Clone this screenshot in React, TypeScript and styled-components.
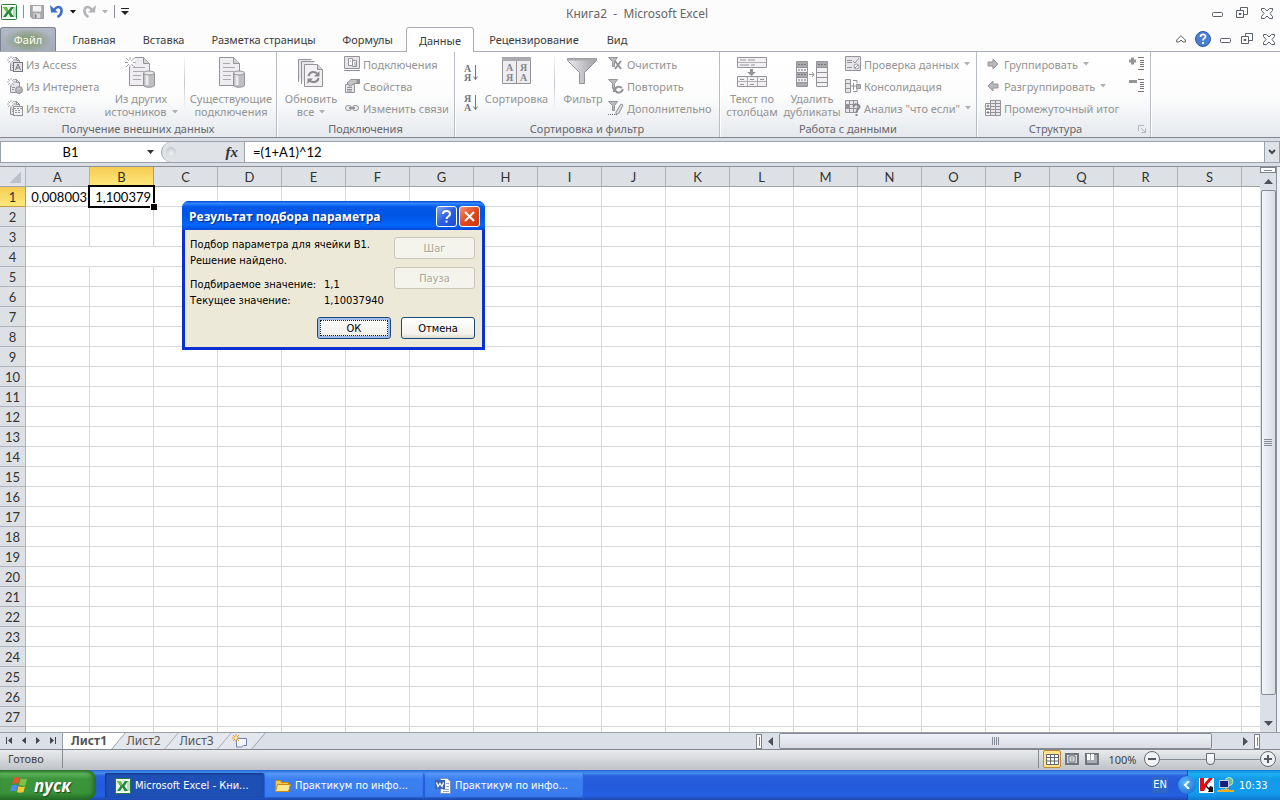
import React from "react";
import styled, { createGlobalStyle, css } from "styled-components";

const UI = `"Noto Sans", "Open Sans", sans-serif`;
const TAHOMA = `"DejaVu Sans Condensed", "DejaVu Sans", sans-serif`;
const CELL = `Lato, "Open Sans", sans-serif`;

const GlobalStyle = createGlobalStyle`
  * { box-sizing: border-box; }
  html, body, #root { height: 100%; margin: 0; }
  body { overflow: hidden; font-family: ${UI}; font-size: 11px; }
  button, input { font: inherit; color: inherit; margin: 0; }
  button { padding: 0; border: 0; background: none; white-space: nowrap; }
  svg { display: block; flex: none; }
`;

const Window = styled.div`
  position: relative;
  display: flex;
  flex-direction: column;
  height: 100vh;
  background: #fcfcfc;
`;

/* ---------- title bar ---------- */

const TitleBar = styled.header`
  display: flex;
  align-items: center;
  height: 28px;
  color: #666;
`;

const QuickAccess = styled.div`
  display: flex;
  flex: 1;
  align-items: center;
  gap: 6px;
  height: 28px;
  padding: 0 0 5px 1px;
`;

const Separator = styled.span`
  width: 1px;
  height: 13px;
  background: #8a8f98;
`;

const Title = styled.h1`
  margin: 0;
  font-size: 12px;
  font-weight: 400;
  line-height: 16px;
  white-space: pre;
`;

const WindowControls = styled.div`
  display: flex;
  flex: 1;
  justify-content: flex-end;
  align-items: center;
  gap: 12px;
  height: 28px;
  padding: 0 7px 2px 0;
`;

const IconButton = styled.button`
  display: flex;
  align-items: center;
  justify-content: center;
`;

/* ---------- tabs ---------- */

const TabBar = styled.nav`
  display: flex;
  align-items: flex-end;
  height: 24px;
  border-bottom: 1px solid #a9adb3;
`;

const Tab = styled.button<{ $w: number; $active?: boolean }>`
  width: ${(p) => p.$w}px;
  height: 24px;
  color: #3b3b3b;
  line-height: 23px;
  ${(p) =>
    p.$active &&
    css`
      margin-bottom: -1px;
      height: 25px;
      border: 1px solid #a9adb3;
      border-bottom: 0;
      border-radius: 3px 3px 0 0;
      background: #fff;
    `}
`;

const FileTab = styled(Tab)`
  margin-right: 3px;
  border: 1px solid #7c828b;
  border-bottom: 0;
  border-radius: 3px 3px 0 0;
  background: radial-gradient(ellipse 24px 12px at 50% 54%, #86a070, #8fa287 45%, transparent), linear-gradient(#b2b8c4, #a4acba);
  color: #fff;
`;

const BookControls = styled.div`
  display: flex;
  flex: 1;
  justify-content: flex-end;
  align-items: center;
  gap: 9px;
  height: 24px;
  padding-right: 5px;
`;

/* ---------- ribbon ---------- */

const Ribbon = styled.section`
  display: flex;
  height: 86px;
  border-bottom: 1px solid #82878f;
  background: linear-gradient(#fff, #fdfdfd 50%, #e6e9ed);
  color: #949494;
`;

const Group = styled.div<{ $w: number }>`
  display: flex;
  flex-direction: column;
  flex: none;
  width: ${(p) => p.$w}px;
  border-right: 1px solid #b9bec5;
  box-shadow: 1px 0 0 #fff;
`;

const GroupBody = styled.div<{ $pad: number }>`
  display: flex;
  height: 67px;
  padding: 1px 0 0 ${(p) => p.$pad}px;
`;

const GroupCaption = styled.div<{ $launcher?: boolean }>`
  position: relative;
  height: 18px;
  padding: 1px ${(p) => (p.$launcher ? 16 : 0)}px 0 0;
  color: #67676f;
  line-height: 18px;
  text-align: center;
`;

const Launcher = styled.button`
  position: absolute;
  right: 4px;
  top: 6px;
`;

const Commands = styled.div<{ $w: number; $top?: number }>`
  flex: none;
  width: ${(p) => p.$w}px;
  padding-top: ${(p) => p.$top ?? 0}px;
`;

const SmallCommand = styled.button`
  display: flex;
  align-items: center;
  gap: 3px;
  height: 22px;
`;

const SortCommand = styled.button`
  display: flex;
  align-items: center;
  height: 30px;
`;

const BigCommand = styled.button<{ $w: number }>`
  display: flex;
  flex: none;
  flex-direction: column;
  align-items: center;
  width: ${(p) => p.$w}px;
  padding-top: 4px;
  line-height: 13px;
`;

const BigLabel = styled.span`
  display: flex;
  flex-direction: column;
  align-items: center;
  margin-top: 3px;
`;

const LabelLine = styled.span`
  display: flex;
  align-items: center;
  gap: 5px;
`;

const Divider = styled.span`
  flex: none;
  width: 1px;
  height: 56px;
  margin: 2px 3px 0;
  background: linear-gradient(#fafafa, #c3c7cd, #fafafa);
`;

/* ---------- formula bar ---------- */

const FormulaBar = styled.section`
  display: flex;
  height: 28px;
  padding: 3px 0;
  background: #d9dee5;
  color: #000;
  font-family: ${CELL};
  font-size: 13px;
`;

const NameBox = styled.div`
  display: flex;
  align-items: center;
  width: 158px;
  border: 1px solid #98a1ac;
  border-right: 0;
  background: #fff;
`;

const NameInput = styled.input`
  flex: 1;
  min-width: 0;
  padding: 0 3px 0 0;
  border: 0;
  outline: 0;
  background: none;
  text-align: center;
`;

const FxBox = styled.div`
  display: flex;
  align-items: center;
  justify-content: space-between;
  width: 87px;
  padding: 0 6px 0 3px;
  border: solid #98a1ac;
  border-width: 1px 1px 1px 0;
  background: linear-gradient(90deg, #fff 8px, #dfe3e8 8px);
`;

const FxCap = styled.div`
  display: flex;
  align-items: center;
  width: 30px;
  height: 20px;
  padding-left: 4px;
  border-left: 1px solid #98a1ac;
  border-radius: 11px 0 0 11px;
  background: #dfe3e8;
`;

const Knob = styled.span`
  width: 10px;
  height: 10px;
  border-radius: 50%;
  background: radial-gradient(circle at 50% 65%, #f2f3f5, #b7bcc4);
`;

const Fx = styled.button`
  font: italic 700 15px "Liberation Serif", serif;
  color: #333;
`;

const FormulaInput = styled.input`
  flex: 1;
  min-width: 0;
  padding: 0 8px;
  border: solid #98a1ac;
  border-width: 1px 0;
  border-radius: 0;
  outline: 0;
  background: #fff;
`;

const ExpandButton = styled(IconButton)`
  width: 16px;
  border: 1px solid #98a1ac;
  background: #dfe3e8;
`;

/* ---------- sheet ---------- */

const Workspace = styled.main`
  display: flex;
  flex: 1;
  min-height: 0;
  border-top: 1px solid #8c9199;
  background: #f0f1f4;
`;

const SheetPane = styled.div`
  flex: 1;
  min-width: 0;
  overflow: hidden;
  background: #fff;
`;

const Sheet = styled.table`
  width: 1306px;
  table-layout: fixed;
  border-collapse: separate;
  border-spacing: 0;
  font-family: ${CELL};
  font-size: 13px;
  line-height: 17px;
`;

const Corner = styled.td`
  width: 26px;
  height: 20px;
  padding: 0;
  border-right: 1px solid #b4b8be;
  border-bottom: 1px solid #9fa5ad;
  background: linear-gradient(135deg, #dfe3e8 50%, #bcc1c8 50%) 10px 5px / 11px 11px no-repeat #dfe3e8;
`;

const headOn = css`
  border-color: #c79a43;
  background: linear-gradient(#f6cc52, #fee87c);
`;

const ColHead = styled.th<{ $on: boolean }>`
  width: 64px;
  height: 20px;
  padding: 2px 0 0;
  border-right: 1px solid #b0b4ba;
  border-bottom: 1px solid #9fa5ad;
  background: #dde1e6;
  color: #333;
  font-weight: 400;
  ${(p) => p.$on && headOn}
`;

const RowHead = styled.th<{ $on: boolean }>`
  height: 20px;
  padding: 2px 0 0;
  border-right: 1px solid #b0b4ba;
  border-bottom: 1px solid #b0b4ba;
  background: #dde1e6;
  color: #333;
  font-weight: 400;
  ${(p) => p.$on && headOn}
`;

const Cell = styled.td<{ $plain?: boolean; $selected?: boolean }>`
  height: 20px;
  padding: 2px 2px 0 0;
  border-right: 1px solid ${(p) => (p.$plain ? "#fff" : "#d6d8da")};
  border-bottom: 1px solid #d6d8da;
  text-align: right;
  ${(p) =>
    p.$selected &&
    css`
      position: relative;
      z-index: 1;
      &::before {
        content: "";
        position: absolute;
        inset: -2px;
        border: 2px solid #000;
      }
      &::after {
        content: "";
        position: absolute;
        right: -4px;
        bottom: -4px;
        width: 6px;
        height: 6px;
        border: solid #fff;
        border-width: 1px 0 0 1px;
        background: #000;
      }
    `}
`;

const VScroll = styled.div`
  display: flex;
  flex-direction: column;
  align-items: center;
  width: 17px;
  margin-right: 3px;
  border-right: 1px solid #8c9199;
  background: #dbdfe6;
`;

const SplitBox = styled.span<{ $vertical?: boolean }>`
  display: flex;
  flex: none;
  align-items: center;
  justify-content: center;
  width: ${(p) => (p.$vertical ? 6 : 16)}px;
  height: ${(p) => (p.$vertical ? 15 : 6)}px;
  border: 1px solid #7d828a;
  background: #fff;
  &::before {
    content: "";
    width: ${(p) => (p.$vertical ? 1 : 8)}px;
    height: ${(p) => (p.$vertical ? 9 : 1)}px;
    background: #7d828a;
  }
`;

const ScrollButton = styled(IconButton)`
  flex: none;
  width: 17px;
  height: 17px;
`;

const VThumb = styled.div`
  display: flex;
  flex: 1;
  align-items: center;
  justify-content: center;
  width: 15px;
  margin-bottom: 20px;
  border: 1px solid #858c98;
  border-radius: 2px;
  background: linear-gradient(90deg, #f3f5f8, #d9dde4);
`;

/* ---------- sheet tab row ---------- */

const SheetBar = styled.div`
  display: flex;
  align-items: center;
  height: 17px;
  padding-right: 20px;
  border-top: 1px solid #989da6;
  background: #dbe0e8;
`;

const SheetNav = styled.div`
  display: flex;
  align-items: center;
  justify-content: space-between;
  flex: none;
  width: 63px;
  height: 16px;
  padding: 0 6px 2px;
  border-right: 1px solid #989da6;
`;

const SheetTabs = styled.div`
  display: flex;
  flex: 1;
  height: 16px;
  overflow: hidden;
  font-size: 12px;
`;

const SheetTab = styled.button<{ $active?: boolean; $w: number }>`
  position: relative;
  z-index: ${(p) => (p.$active ? 2 : 1)};
  width: ${(p) => p.$w}px;
  height: 16px;
  padding-right: 4px;
  color: #555;
  font-weight: ${(p) => (p.$active ? 700 : 400)};
  line-height: 16px;
  &::before {
    content: "";
    position: absolute;
    z-index: -1;
    inset: 0 0 0 ${(p) => (p.$active ? -20 : 0)}px;
    transform: skewX(-40deg);
    border-right: 1px solid #989da6;
    background: ${(p) => (p.$active ? "#fff" : "#e4e8ee")};
  }
`;

const NewSheetTab = styled(SheetTab)`
  display: flex;
  align-items: center;
  justify-content: center;
`;

const HScroll = styled.div`
  display: flex;
  align-items: center;
  flex: none;
  width: 504px;
  height: 16px;
`;

const HThumb = styled.div`
  display: flex;
  flex: 1;
  align-items: center;
  justify-content: center;
  height: 16px;
  margin-right: 25px;
  border: 1px solid #858c98;
  border-radius: 2px;
  background: linear-gradient(#eef1f5, #d9dde4);
`;

/* ---------- status bar ---------- */

const StatusBar = styled.footer`
  display: flex;
  align-items: center;
  height: 21px;
  padding: 0 4px 2px 0;
  border-top: 1px solid #82878f;
  background: linear-gradient(#e9eaec, #bfc3c7);
  color: #444;
`;

const StatusText = styled.span`
  width: 63px;
  padding-left: 8px;
  border-right: 1px solid #878b92;
  line-height: 18px;
`;

const ViewTools = styled.div`
  display: flex;
  align-items: center;
  gap: 2px;
  margin-left: auto;
  padding-left: 4px;
  border-left: 1px solid #878b92;
`;

const ViewButton = styled(IconButton)<{ $on?: boolean }>`
  width: 18px;
  height: 18px;
  border-radius: 2px;
  ${(p) =>
    p.$on &&
    css`
      border: 1px solid #c28a30;
      background: #fde38a;
    `}
`;

const ZoomValue = styled.button`
  width: 43px;
`;

const RoundButton = styled(IconButton)`
  width: 16px;
  height: 16px;
  border: 1px solid #666b73;
  border-radius: 50%;
  background: #f1f2f4;
`;

const ZoomSlider = styled.input`
  width: 100px;
  height: 16px;
  appearance: none;
  background: linear-gradient(#868c96, #868c96) center / 100% 1px no-repeat;
  &::-webkit-slider-thumb {
    appearance: none;
    width: 9px;
    height: 12px;
    background: linear-gradient(#fff, #e6e8eb);
    border: 1px solid #6a6f78;
    border-radius: 1px 1px 5px 5px;
  }
`;

/* ---------- taskbar ---------- */

const Taskbar = styled.div`
  display: flex;
  align-items: stretch;
  height: 30px;
  background: linear-gradient(#2a63d8, #4590ee 10%, #2860dd 20%, #2259d9 50%, #2461e2 85%, #1b48b0);
  color: #fff;
  font-family: ${TAHOMA};
`;

const StartButton = styled.button`
  display: flex;
  align-items: center;
  gap: 5px;
  width: 96px;
  margin-right: 9px;
  padding-left: 10px;
  border-radius: 0 9px 9px 0;
  background: linear-gradient(#2f7a30, #5cb45a 12%, #3c953b 30%, #3a933a 75%, #256c28);
  box-shadow: inset -3px 0 4px #24682a;
  font: italic 700 17px "Open Sans", "Noto Sans", sans-serif;
  text-shadow: 1px 1px 1px #1c4a1c;
`;

const TaskButton = styled.button<{ $active?: boolean }>`
  display: flex;
  align-items: center;
  gap: 4px;
  width: 159px;
  height: 25px;
  margin: 3px 1px 0 0;
  padding-left: 10px;
  border-radius: 2px;
  background: ${(p) => (p.$active ? "#1e4fb4" : "linear-gradient(#5a98f8, #3b80f2 25%, #387bee)")};
  box-shadow: ${(p) => (p.$active ? "inset 1px 1px 2px #123a8c" : "inset -1px -1px 1px #2a5cc4")};
`;

const Language = styled.span`
  align-self: center;
  margin: 0 19px 0 auto;
  padding: 0 1px;
  background: #2f67c5;
  line-height: 16px;
`;

const Tray = styled.div`
  display: flex;
  align-items: center;
  gap: 3px;
  width: 93px;
  background: linear-gradient(#1180da, #1cb0f2 12%, #139ae9 30%, #129aec 80%, #0e7bd0);
  box-shadow: inset 1px 0 0 #0d4f9e;
`;

const TrayToggle = styled(IconButton)`
  flex: none;
  width: 18px;
  height: 18px;
  margin-left: -9px;
  border-radius: 50%;
  background: radial-gradient(circle at 40% 35%, #5ab8ff, #0f62c8);
`;

const Clock = styled.time`
  margin-left: 2px;
`;

/* ---------- dialog ---------- */

const Dialog = styled.div`
  position: absolute;
  left: 182px;
  top: 201px;
  width: 303px;
  padding: 0 3px 3px;
  border-radius: 7px 7px 0 0;
  background: #0a30d4;
  color: #000;
  font-family: ${TAHOMA};
`;

const DialogTitle = styled.div`
  display: flex;
  align-items: center;
  gap: 2px;
  height: 29px;
  margin: 0 -3px;
  padding: 2px 5px 0 7px;
  border-radius: 7px 7px 0 0;
  background: linear-gradient(#0842c8, #2f88ff 8%, #0458e8 20%, #0055e5 50%, #0366fc 85%, #0548d4);
  color: #fff;
`;

const DialogHeading = styled.h2`
  flex: 1;
  margin: 0;
  font: 700 12px "Open Sans", "Noto Sans", sans-serif;
  text-shadow: 1px 1px 1px #0a2a80;
  white-space: nowrap;
`;

const CaptionButton = styled(IconButton)<{ $close?: boolean }>`
  width: 21px;
  height: 21px;
  border: 1px solid #fff;
  border-radius: 3px;
  background: ${(p) =>
    p.$close ? "linear-gradient(135deg, #f0957a, #e0491f 50%, #c8350e)" : "linear-gradient(135deg, #7ba4f4, #2b5fe0 50%, #1d4bd0)"};
`;

const DialogBody = styled.div`
  height: 117px;
  padding: 7px 7px 0 5px;
  background: #ece9d8;
`;

const DialogTop = styled.div`
  display: flex;
  justify-content: space-between;
`;

const DialogText = styled.div`
  line-height: 16px;
  white-space: nowrap;
`;

const Message = styled.p`
  margin: 0 0 8px;
`;

const Values = styled.dl`
  display: grid;
  grid-template-columns: 134px auto;
  margin: 0;
  dd { margin: 0; }
`;

const SideButtons = styled.div`
  display: flex;
  flex-direction: column;
  gap: 8px;
`;

const DialogButton = styled.button<{ $w: number; $default?: boolean }>`
  width: ${(p) => p.$w}px;
  height: 22px;
  padding-top: 1px;
  border: 1px solid #1c4a80;
  border-radius: 3px;
  background: linear-gradient(#fff, #f3f2ec 80%, #dcd8ca);
  line-height: 19px;
  ${(p) =>
    p.$default &&
    css`
      box-shadow: inset 0 0 0 2px #9db9ea;
      outline: 1px dotted #222;
      outline-offset: -4px;
    `}
  &:disabled {
    border-color: #c9c7ba;
    background: #f4f3ec;
    color: #a7a594;
    text-shadow: 1px 1px 0 #fff;
  }
`;

const DialogActions = styled.div`
  display: flex;
  justify-content: flex-end;
  gap: 10px;
  padding-top: 8px;
`;

/* ---------- icons ---------- */

const G = "#949498";
const D = "#77777b";
const L = "#e8e5ea";

const Small = ({ children }: { children: React.ReactNode }) => (
  <svg width="16" height="16" viewBox="0 0 16 16" fill="none" stroke={G}>
    {children}
  </svg>
);

const Big = ({ children }: { children: React.ReactNode }) => (
  <svg width="32" height="32" viewBox="0 0 32 32" fill="none" stroke={G}>
    {children}
  </svg>
);

const Spark = () => <path d="M4 0v2M4 6v3M0 4h2M6 4h3M1 1l2 2M7 1 5 3M1 7l2-2M7 7 5 5" stroke="#aaaaae" />;

const SourcePage = ({ children }: { children?: React.ReactNode }) => (
  <Small>
    <path d="M3.500 7.500v7h9v-10l-3-3h-2" fill={L} />
    <path d="M9.500 1.500v3h3M5 9.500h3M5 11.500h2" />
    <Spark />
    {children}
  </Small>
);

const AccessIcon = () => (
  <SourcePage>
    <rect x="6.500" y="6.500" width="9" height="9" fill="#e4e4e6" stroke={D} />
    <path d="m8.500 14 2.500-6 2.500 6M9.500 12h3" stroke={D} />
  </SourcePage>
);
const WebIcon = () => (
  <SourcePage>
    <circle cx="12" cy="12" r="3.500" fill="#b4b4b8" />
    <path d="M10 11h3" stroke="#d8d8dc" />
  </SourcePage>
);
const TextIcon = () => (
  <SourcePage>
    <rect x="6.500" y="6.500" width="9" height="9" fill="#f4f4f4" />
    <path d="M7 8.500h8M8 10.500h6M8 12.500h6" strokeDasharray="2 1" />
  </SourcePage>
);

const Page = () => (
  <>
    <path d="M4.500.5h14l6 6v22h-20z" fill="#efedf1" />
    <path d="M18.500.5v6h6" fill="#d5d5d9" />
    <path d="M8 10.500h12M8 14.500h11M8 18.500h8M8 22.500h8" stroke="#aaaaae" />
  </>
);
const Database = () => (
  <>
    <path d="M18.500 16v12c0 3 11 3 11 0V16" fill="#bfbfc3" />
    <path d="M22 18v10" stroke="#ededf0" strokeWidth="3" />
    <ellipse cx="24" cy="16" rx="5.500" ry="2" fill="#e7e7ea" />
  </>
);
const OtherSources = () => (
  <Big>
    <Page />
    <Database />
    <path d="M0 0h10v10H0z" fill="#fff" stroke="none" />
    <path d="M5 0v3M5 8v3M0 5.500h3M8 5.500h3M1 1l3 3M10 1 6 4M1 10l3-3M10 10 6 7" stroke="#aaaaae" />
  </Big>
);
const ExistingIcon = () => (
  <Big>
    <Page />
    <path d="M8 6.500h7" stroke="#aaaaae" />
    <Database />
  </Big>
);
const RefreshIcon = () => (
  <Big>
    <path d="M3.500 25V2.500h13M6.500 27V4.500h13" fill={L} />
    <path d="M9.500 7.500h13l5 5v17h-18z" fill="#f3f0f4" />
    <path d="M22.500 7.500v5h5" fill="#d5d5d9" />
    <path d="M13.500 19c1-5 7-5 9-2M23.500 21c-1 5-7 5-9 2" stroke="#88888c" strokeWidth="2" />
    <path d="M24.500 14v5.500h-5.500zM12.500 27v-5.500h5.500z" fill="#88888c" stroke="none" />
  </Big>
);
const ConnectionsIcon = () => (
  <Small>
    <path d="M.5.500h15v12H.5z" fill={L} />
    <path d="M4.500 2.500h4v7h-4zM8.500 4.500h4v6h-4z" fill="#fff" />
    <path d="M0 14.500h16M10 7h2M10 9h2M6 5h1" />
  </Small>
);
const PropertiesIcon = () => (
  <Small>
    <path d="M1.500 6.500h9v8h-9z" fill={L} />
    <path d="M3 9.500h5M3 11.500h5M3 13h5" />
    <path d="m3 5 4-3.500h6v4h-3l-4 3z" fill="#c4c4c8" />
    <path d="M13 1h3v5h-3z" fill={G} stroke="none" />
  </Small>
);
const LinksIcon = () => (
  <Small>
    <rect x="1.500" y="5.500" width="6" height="5" rx="2.500" fill="#eee" />
    <rect x="8.500" y="5.500" width="6" height="5" rx="2.500" fill="#eee" />
    <path d="M5 8h6" strokeWidth="2" />
  </Small>
);

const SortLetters = ({ a, b }: { a: string; b: string }) => (
  <svg width="16" height="18" viewBox="0 0 16 18" fill="none" stroke={D}>
    <g fill={D} stroke="none" fontFamily="Liberation Serif, serif" fontSize="10" fontWeight="700">
      <text x="0" y="8">{a}</text>
      <text x="0" y="17">{b}</text>
    </g>
    <path d="M11.500 1v15M9.500 12.500l2 3 2-3" />
  </svg>
);
const SortIcon = () => (
  <Big>
    <path d="M1.500.500h28v26h-28z" fill="#efedf1" />
    <path d="M1 0h29v4H1z" fill="#aaaaae" stroke="none" />
    <path d="M15.500 4v22" />
    <g fill="#85858a" stroke="none" fontFamily="Liberation Serif, serif" fontSize="10" fontWeight="700">
      <text x="5" y="14">А</text>
      <text x="5" y="24">Я</text>
      <text x="19" y="14">Я</text>
      <text x="19" y="24">А</text>
    </g>
  </Big>
);
const FilterIcon = () => (
  <Big>
    <defs>
      <linearGradient id="funnel">
        <stop offset="0" stopColor="#ededf0" />
        <stop offset="1" stopColor="#a0a0a5" />
      </linearGradient>
    </defs>
    <path d="M.5 1.500h29v2l-12 12v11h-5v-11l-12-12z" fill="url(#funnel)" />
    <path d="M1 2.500h28" stroke="#aaaaae" strokeWidth="2" />
  </Big>
);
const MiniFunnel = () => <path d="M.5 1.500h9l-3 4v5h-2v-5z" fill="#bcbcc0" />;
const ClearIcon = () => (
  <Small>
    <MiniFunnel />
    <path d="m7 5 6 8M13 5l-6 8" strokeWidth="2" />
  </Small>
);
const ReapplyIcon = () => (
  <Small>
    <MiniFunnel />
    <path d="M7 12c1-4 5-4 7-2M15 11c-1 4-5 4-7 3" strokeWidth="2" />
    <path d="M5 9v5h5z" fill={G} stroke="none" />
  </Small>
);
const AdvancedIcon = () => (
  <Small>
    <MiniFunnel />
    <path d="m8 12 5-8 2 1-4 8-3 2z" fill="#ddd" />
    <path d="M0 14.500h9" stroke={D} strokeDasharray="1 1" />
  </Small>
);
const TextColumnsIcon = () => (
  <Big>
    <path d="M1.500.500h29v10h-29zM1.500 19.500h29v10h-29z" fill="#f3f0f4" />
    <path d="M2 5.500h28M2 24.500h28M11.500 20v9M21.500 20v9" stroke="#b0b0b4" />
    <path d="M4 3h6M12 3h7M4 8h9M15 8h4M4 22.500h4M14 22.500h4M24 22.500h4M4 27.500h4M14 27.500h4" />
    <path d="M14 12h3v3h3l-4.500 4-4.500-4h3z" fill={G} stroke="none" />
  </Big>
);
const DuplicatesIcon = () => (
  <Big>
    <path d="M.5 4.500h11v25H.5zM20.500 4.500h11v25h-11z" fill="#f3f0f4" />
    <path d="M1 5h10v5H1zM1 15h10v5H1zM1 25h10v4H1zM21 5h10v5H21z" fill="#aaaaae" stroke="none" />
    <path d="M0 10.500h12M0 15.500h12M0 20.500h12M0 25.500h12M20 10.500h12M20 15.500h12M20 20.500h12M20 25.500h12M13 17.500h5M16 15l2 2.500-2 2.500" />
    <path d="M2 7.500h8M2 13h8M2 17.500h8M2 23h8M22 7.500h8" strokeDasharray="2 1" stroke={D} />
  </Big>
);
const ValidationIcon = () => (
  <Small>
    <path d="M.5.500h15v14H.5z" fill={L} />
    <path d="M2 4.500h5M2 6.500h5M2 11.500h5M8 5l2 2 4-5" />
    <circle cx="11.500" cy="10.500" r="2.500" fill="#fff" />
    <path d="m10 12 3-3" />
  </Small>
);
const ConsolidateIcon = () => (
  <Small>
    <path d="M.5 1.500h5v13h-5zM1 5.500h4M1 10.500h4" fill={L} />
    <path d="M5 8h6M8.500 5v7M8 2.500h4v3M8 13.500h4v-3" />
    <path d="M11.500 6.500h4v4h-4z" fill="#b4b4b8" />
  </Small>
);
const WhatIfIcon = () => (
  <Small>
    <path d="M.5.500h12v12H.5z" fill={L} />
    <path d="M.5 4.500h12M.5 8.500h12M4.500 1v11M8.500 1v11" />
    <path d="M1 5h3v3H1z" fill={G} stroke="none" />
    <path d="M8.500 7c0-4 6-3 6 0 0 2-3 2-3 5M10.500 15h2" stroke="#88888c" strokeWidth="2" />
  </Small>
);
const ArrowIcon = ({ left }: { left?: boolean }) => (
  <Small>
    <path d={left ? "m3 8 5-5v3h5v4H8v3z" : "m13 8-5-5v3H3v4h5v3z"} fill="#b8b8bc" />
  </Small>
);
const SubtotalIcon = () => (
  <Small>
    <path d="M5.500.500h10v15h-10z" fill={L} />
    <path d="M5.500 3.500h10M5.500 6.500h10M5.500 9.500h10M5.500 12.500h10M10.500 1v14" />
    <path d="M.5 3.500h5v5H.5zM.5 9.500h5v6H.5z" fill="#fff" />
    <path d="M1.500 6h3M3 4.500v3M1.500 12.500h3M3 11v3" stroke={D} />
  </Small>
);
const DetailIcon = ({ minus }: { minus?: boolean }) => (
  <Small>
    <path d={minus ? "M0 3.500h8" : "M0 5h7M3.500 1.500v7"} strokeWidth="3" />
    <path d="M9 1.500h6M11 4.500h4M11 6.500h4M11 8.500h4M11 10.500h4M9 13.500h6" stroke={D} />
  </Small>
);

const Caret = ({ color = "#b0b0b4" }: { color?: string }) => (
  <svg width="6" height="4" viewBox="0 0 6 4">
    <path d="M0 0h6L3 3.500z" fill={color} />
  </svg>
);

const ExcelIcon = () => (
  <svg width="16" height="16" viewBox="0 0 16 16">
    <rect x=".5" y=".5" width="15" height="15" rx="1" fill="#fff" stroke="#1f7a3c" />
    <path d="M12 3h3v10h-3z" fill="#b9dcc0" />
    <path d="M1 2h10v12H1z" fill="#e6f4e5" />
    <path d="M2 3h3.500l2 3.500L10 3h3L9.500 8l3.500 5H9.500l-2-3.500L5 13H2l3.500-5z" fill="#238a3c" />
    <path d="M2 3h3.500l2 3.500-2 1.500z" fill="#6bbf4a" />
  </svg>
);

const SaveIcon = () => (
  <svg width="14" height="14" viewBox="0 0 15 15">
    <path d="M.5.500h14v14h-12l-2-2z" fill="#a8a8ac" stroke="#9a9a9e" />
    <path d="M3 1h9v6H3z" fill="#f3f3f5" />
    <path d="M4 9h7v5H4z" fill="#dcdce0" />
    <path d="M5 10h2v4H5z" fill="#86868a" />
  </svg>
);

const UndoIcon = ({ redo }: { redo?: boolean }) => (
  <svg width="14" height="15" viewBox="0 0 14 15">
    <g transform={redo ? "translate(14 0) scale(-1 1)" : undefined}>
      <path d="M4 6c4-5 8-3 7.500 1.500-.3 2.500-2 4.500-4 5.500" fill="none" stroke={redo ? "#b4b4b8" : "#3c6fc8"} strokeWidth="2.500" />
      <path d="M0 1l1 7.500h7z" fill={redo ? "#b4b4b8" : "#3c6fc8"} />
    </g>
  </svg>
);

const MinIcon = () => (
  <svg width="12" height="12" viewBox="0 0 12 12">
    <rect x=".5" y="5.500" width="10" height="4" rx="1" fill="#fff" stroke="#5b6069" />
  </svg>
);
const RestoreIcon = () => (
  <svg width="13" height="12" viewBox="0 0 13 12" fill="#fff" stroke="#5b6069">
    <path d="M4.500.500h7v7h-7z" />
    <path d="M.5 3.500h7v7h-7zM3 6.500h2v1H3z" />
  </svg>
);
const CloseIcon = () => (
  <svg width="12" height="11" viewBox="0 0 12 11">
    <path d="M.5.500h3L6 3 8.500.500h3v2L9 5.500l2.500 3v2h-3L6 8l-2.500 2.500h-3v-2L3 5.500.5 2.500z" fill="#fff" stroke="#5b6069" />
  </svg>
);
const CollapseIcon = () => (
  <svg width="10" height="8" viewBox="0 0 10 8">
    <path d="M5 .7 9.300 5v2H7L5 5 3 7H.7V5z" fill="#fff" stroke="#5b6069" />
  </svg>
);
const HelpIcon = () => (
  <svg width="16" height="16" viewBox="0 0 16 16">
    <circle cx="8" cy="8" r="7.500" fill="#4a7fd0" stroke="#2c5aa8" />
    <path d="M5.500 6c0-3.500 5-3.300 5-.5 0 2-2.500 1.800-2.500 4M8 11v2" fill="none" stroke="#fff" strokeWidth="1.800" />
  </svg>
);

type Dir = "up" | "down" | "left" | "right";
const arrowPath: Record<Dir, string> = {
  up: "M0 7h9L4.500 2z",
  down: "M0 2h9L4.500 7z",
  left: "M7 0v9L2 4.500z",
  right: "M2 0v9l5-4.500z",
};
const Arrow = ({ dir }: { dir: Dir }) => (
  <svg width="9" height="9" viewBox="0 0 9 9" fill="#4c5058">
    <path d={arrowPath[dir]} />
  </svg>
);
const NavArrow = ({ dir, bar }: { dir: "left" | "right"; bar?: boolean }) => (
  <svg width="7" height="7" viewBox="0 0 7 7" fill="#40444c">
    <path d={dir === "left" ? "M6 0v7L2 3.500z" : "M1 0v7l4-3.500z"} />
    {bar && <path d={dir === "left" ? "M0 0h1v7H0z" : "M6 0h1v7H6z"} />}
  </svg>
);

const WindowsLogo = () => (
  <svg width="19" height="18" viewBox="0 0 19 18">
    <path d="M4 2c2-1.500 4-1 5.500 0L8 8C6 7 4 7 2 8z" fill="#e8542c" />
    <path d="M10.500 2.500c2 1 4 1 6.500 0L15.500 9c-2 1-4.500 1-6.500-.5z" fill="#7fc241" />
    <path d="M1.800 9.500c2-1.200 4-1 5.800 0L6 15.500c-2-1-4-1-6 0z" fill="#4b8df0" />
    <path d="M8.500 10c2 1.200 4.500 1.200 6.500.2L13.500 16c-2.500 1-4.500 1-6.500 0z" fill="#fbc92d" />
  </svg>
);
const FolderIcon = () => (
  <svg width="16" height="16" viewBox="0 0 16 16" stroke="#c38c14">
    <path d="M.5 13.500v-10l1-1h4l1 2h7v9z" fill="#f4c84c" />
    <path d="m.5 13.500 2-7h13l-2 7z" fill="#fde68c" />
  </svg>
);
const WordIcon = () => (
  <svg width="16" height="16" viewBox="0 0 16 16">
    <path d="M5.500.500h7l3 3v12h-10z" fill="#fff" stroke="#7d92b8" />
    <path d="M8 11.500h6M8 13.500h6M11 5.500h3M11 8.500h3" stroke="#8fa4cc" />
    <path d="M0 2h10v9H0z" fill="#3a63ae" />
    <path d="m1.500 4.500 1.500 4 2-3 2 3 1.500-4" fill="none" stroke="#fff" strokeWidth="1.300" />
  </svg>
);
const KasperskyIcon = () => (
  <svg width="15" height="15" viewBox="0 0 15 15">
    <path d="M0 0h15v15H0z" fill="#fff" />
    <path d="M1 0h4v6l5-6h4L8 7l-3 6H1z" fill="#e01010" />
    <path d="m7 7 3 3 1-2 3 1v5H9l1-2-3-3z" fill="#111" />
  </svg>
);
const NetworkIcon = () => (
  <svg width="17" height="16" viewBox="0 0 17 16">
    <circle cx="12" cy="4.500" r="4" fill="#6cc48c" stroke="#b8e8d8" />
    <path d="M2.500 3.500h9v7h-9z" fill="#14207c" stroke="#c8ccd8" />
    <path d="M4 12h8v1H4z" fill="#aab" />
    <path d="M0 14h17M9 11v3" stroke="#f0b020" strokeWidth="2" />
  </svg>
);
const NewSheetIcon = () => (
  <svg width="16" height="14" viewBox="0 0 16 14">
    <path d="M4.500 4.500h10v7h-3l-2 1.500h-5z" fill="#f4f6fa" stroke="#6d82a8" />
    <path d="M4 0v8M0 4h8M1 1l6 6M7 1 1 7" stroke="#e09a2c" />
    <circle cx="4" cy="4" r="1.500" fill="#fff3c0" />
  </svg>
);
const NormalView = () => (
  <svg width="13" height="11" viewBox="0 0 13 11">
    <path d="M.5.500h12v10H.5zM.5 3.500h12M.5 7h12M4.500.500v10M8.500.500v10" fill="#fff" stroke="#62666e" />
  </svg>
);
const LayoutView = () => (
  <svg width="14" height="12" viewBox="0 0 14 12">
    <path d="M1 1h12v10H1z" fill="#d4d6d9" stroke="#72767e" strokeWidth="2" />
    <path d="M4 3h6v6H4z" fill="#fff" stroke="#62666e" />
    <path d="M5.500 5h3M5.500 7h3" stroke="#62666e" />
  </svg>
);
const BreakView = () => (
  <svg width="14" height="12" viewBox="0 0 14 12">
    <path d="M1 1h12v10H1z" fill="#a9acb1" stroke="#72767e" strokeWidth="2" />
    <path d="M2 1h3v6H2zM6 1h3v6H6z" fill="#fff" />
  </svg>
);

const SmallCmd = ({ icon, text, menu }: { icon: React.ReactNode; text: string; menu?: boolean }) => (
  <SmallCommand>
    {icon}
    <LabelLine>
      {text}
      {menu && <Caret />}
    </LabelLine>
  </SmallCommand>
);

const BigCmd = ({ w, icon, lines, menu }: { w: number; icon: React.ReactNode; lines: string[]; menu?: boolean }) => (
  <BigCommand $w={w}>
    {icon}
    <BigLabel>
      {lines.map((line, i) => (
        <LabelLine key={line}>
          {line}
          {menu && i === lines.length - 1 && <Caret />}
        </LabelLine>
      ))}
    </BigLabel>
  </BigCommand>
);

const tabs: [string, number][] = [
  ["Главная", 70],
  ["Вставка", 69],
  ["Разметка страницы", 131],
  ["Формулы", 77],
  ["Данные", 68],
  ["Рецензирование", 120],
  ["Вид", 46],
];

const columns = "ABCDEFGHIJKLMNOPQRS".split("");
const rows = Array.from({ length: 27 }, (_, i) => i + 1);
const values: Record<string, string> = { A1: "0,008003", B1: "1,100379" };

export default function App() {
  return (
    <Window>
      <GlobalStyle />
      <TitleBar>
        <QuickAccess>
          <ExcelIcon />
          <Separator />
          <IconButton aria-label="Сохранить"><SaveIcon /></IconButton>
          <IconButton aria-label="Отменить"><UndoIcon /></IconButton>
          <Caret color="#111" />
          <IconButton aria-label="Вернуть"><UndoIcon redo /></IconButton>
          <Caret />
          <Separator />
          <IconButton aria-label="Настройка панели">
            <svg width="8" height="7" viewBox="0 0 8 7"><path d="M0 0h8v1H0zM0 3h8L4 7z" fill="#222" /></svg>
          </IconButton>
        </QuickAccess>
        <Title>{"Книга2  -  Microsoft Excel"}</Title>
        <WindowControls>
          <IconButton aria-label="Свернуть"><MinIcon /></IconButton>
          <IconButton aria-label="Восстановить"><RestoreIcon /></IconButton>
          <IconButton aria-label="Закрыть"><CloseIcon /></IconButton>
        </WindowControls>
      </TitleBar>

      <TabBar>
        <FileTab $w={56}>Файл</FileTab>
        {tabs.map(([name, w]) => (
          <Tab key={name} $w={w} $active={name === "Данные"}>{name}</Tab>
        ))}
        <BookControls>
          <IconButton aria-label="Свернуть ленту"><CollapseIcon /></IconButton>
          <IconButton aria-label="Справка"><HelpIcon /></IconButton>
          <IconButton aria-label="Свернуть окно"><MinIcon /></IconButton>
          <IconButton aria-label="Восстановить окно"><RestoreIcon /></IconButton>
          <IconButton aria-label="Закрыть окно"><CloseIcon /></IconButton>
        </BookControls>
      </TabBar>

      <Ribbon>
        <Group $w={277}>
          <GroupBody $pad={7}>
            <Commands $w={94}>
              <SmallCmd icon={<AccessIcon />} text="Из Access" />
              <SmallCmd icon={<WebIcon />} text="Из Интернета" />
              <SmallCmd icon={<TextIcon />} text="Из текста" />
            </Commands>
            <BigCmd w={80} icon={<OtherSources />} lines={["Из других", "источников"]} menu />
            <Divider />
            <BigCmd w={86} icon={<ExistingIcon />} lines={["Существующие", "подключения"]} />
          </GroupBody>
          <GroupCaption>Получение внешних данных</GroupCaption>
        </Group>
        <Group $w={178}>
          <GroupBody $pad={1}>
            <BigCmd w={66} icon={<RefreshIcon />} lines={["Обновить", "все"]} menu />
            <Commands $w={108}>
              <SmallCmd icon={<ConnectionsIcon />} text="Подключения" />
              <SmallCmd icon={<PropertiesIcon />} text="Свойства" />
              <SmallCmd icon={<LinksIcon />} text="Изменить связи" />
            </Commands>
          </GroupBody>
          <GroupCaption>Подключения</GroupCaption>
        </Group>
        <Group $w={265}>
          <GroupBody $pad={9}>
            <Commands $w={18} $top={5}>
              <SortCommand aria-label="Сортировка от А до Я"><SortLetters a="А" b="Я" /></SortCommand>
              <SortCommand aria-label="Сортировка от Я до А"><SortLetters a="Я" b="А" /></SortCommand>
            </Commands>
            <BigCmd w={69} icon={<SortIcon />} lines={["Сортировка"]} />
            <Divider />
            <BigCmd w={50} icon={<FilterIcon />} lines={["Фильтр"]} />
            <Commands $w={108}>
              <SmallCmd icon={<ClearIcon />} text="Очистить" />
              <SmallCmd icon={<ReapplyIcon />} text="Повторить" />
              <SmallCmd icon={<AdvancedIcon />} text="Дополнительно" />
            </Commands>
          </GroupBody>
          <GroupCaption>Сортировка и фильтр</GroupCaption>
        </Group>
        <Group $w={257}>
          <GroupBody $pad={5}>
            <BigCmd w={54} icon={<TextColumnsIcon />} lines={["Текст по", "столбцам"]} />
            <BigCmd w={66} icon={<DuplicatesIcon />} lines={["Удалить", "дубликаты"]} />
            <Commands $w={130}>
              <SmallCmd icon={<ValidationIcon />} text="Проверка данных" menu />
              <SmallCmd icon={<ConsolidateIcon />} text="Консолидация" />
              <SmallCmd icon={<WhatIfIcon />} text={'Анализ "что если"'} menu />
            </Commands>
          </GroupBody>
          <GroupCaption>Работа с данными</GroupCaption>
        </Group>
        <Group $w={174}>
          <GroupBody $pad={8}>
            <Commands $w={144}>
              <SmallCmd icon={<ArrowIcon />} text="Группировать" menu />
              <SmallCmd icon={<ArrowIcon left />} text="Разгруппировать" menu />
              <SmallCmd icon={<SubtotalIcon />} text="Промежуточный итог" />
            </Commands>
            <Commands $w={16}>
              <SmallCommand aria-label="Отобразить детали"><DetailIcon /></SmallCommand>
              <SmallCommand aria-label="Скрыть детали"><DetailIcon minus /></SmallCommand>
            </Commands>
          </GroupBody>
          <GroupCaption $launcher>
            Структура
            <Launcher aria-label="Параметры структуры">
              <svg width="8" height="8" viewBox="0 0 8 8" fill="none" stroke="#b4b8be">
                <path d="M.5 6V.500H6M3 3l4 4M7.500 3.500v4h-4" />
              </svg>
            </Launcher>
          </GroupCaption>
        </Group>
      </Ribbon>

      <FormulaBar>
        <NameBox>
          <NameInput aria-label="Имя" defaultValue="B1" />
          <IconButton aria-label="Список имён">
            <svg width="15" height="5" viewBox="0 0 15 5"><path d="M4 0h7L7.500 4z" fill="#333" /></svg>
          </IconButton>
        </NameBox>
        <FxBox>
          <FxCap><Knob /></FxCap>
          <Fx aria-label="Вставить функцию">fx</Fx>
        </FxBox>
        <FormulaInput aria-label="Строка формул" defaultValue="=(1+A1)^12" />
        <ExpandButton aria-label="Развернуть строку формул">
          <svg width="8" height="6" viewBox="0 0 8 6"><path d="m1 1 3 3 3-3" fill="none" stroke="#444952" strokeWidth="2" /></svg>
        </ExpandButton>
      </FormulaBar>

      <Workspace>
        <SheetPane>
          <Sheet>
            <thead>
              <tr>
                <Corner />
                {columns.map((c) => (
                  <ColHead key={c} scope="col" $on={c === "B"}>{c}</ColHead>
                ))}
                <ColHead as="td" $on={false} />
              </tr>
            </thead>
            <tbody>
              {rows.map((r) => (
                <tr key={r}>
                  <RowHead scope="row" $on={r === 1}>{r}</RowHead>
                  {columns.map((c) => (
                    <Cell key={c} $selected={c + r === "B1"} $plain={r === 4 && "ABC".includes(c)}>
                      {values[c + r]}
                    </Cell>
                  ))}
                  <Cell />
                </tr>
              ))}
              <tr>
                <RowHead as="td" $on={false} />
                {columns.map((c) => (
                  <Cell key={c} />
                ))}
                <Cell />
              </tr>
            </tbody>
          </Sheet>
        </SheetPane>
        <VScroll>
          <SplitBox />
          <ScrollButton aria-label="Вверх"><Arrow dir="up" /></ScrollButton>
          <VThumb>
            <svg width="8" height="7" viewBox="0 0 8 7" stroke="#858c98"><path d="M0 .5h8M0 2.500h8M0 4.500h8M0 6.500h8" /></svg>
          </VThumb>
          <ScrollButton aria-label="Вниз"><Arrow dir="down" /></ScrollButton>
        </VScroll>
      </Workspace>

      <SheetBar>
        <SheetNav>
          <IconButton aria-label="Первый лист"><NavArrow dir="left" bar /></IconButton>
          <IconButton aria-label="Предыдущий лист"><NavArrow dir="left" /></IconButton>
          <IconButton aria-label="Следующий лист"><NavArrow dir="right" /></IconButton>
          <IconButton aria-label="Последний лист"><NavArrow dir="right" bar /></IconButton>
        </SheetNav>
        <SheetTabs>
          <SheetTab $active $w={56}>Лист1</SheetTab>
          <SheetTab $w={53}>Лист2</SheetTab>
          <SheetTab $w={53}>Лист3</SheetTab>
          <NewSheetTab $w={34} aria-label="Вставить лист"><NewSheetIcon /></NewSheetTab>
        </SheetTabs>
        <HScroll>
          <SplitBox $vertical />
          <ScrollButton aria-label="Влево"><Arrow dir="left" /></ScrollButton>
          <HThumb>
            <svg width="7" height="8" viewBox="0 0 7 8" stroke="#858c98"><path d="M.5 0v8M2.500 0v8M4.500 0v8M6.500 0v8" /></svg>
          </HThumb>
          <ScrollButton aria-label="Вправо"><Arrow dir="right" /></ScrollButton>
          <SplitBox $vertical />
        </HScroll>
      </SheetBar>

      <StatusBar>
        <StatusText>Готово</StatusText>
        <ViewTools>
          <ViewButton $on aria-label="Обычный"><NormalView /></ViewButton>
          <ViewButton aria-label="Разметка страницы"><LayoutView /></ViewButton>
          <ViewButton aria-label="Страничный режим"><BreakView /></ViewButton>
        </ViewTools>
        <ZoomValue>100%</ZoomValue>
        <RoundButton aria-label="Уменьшить">
          <svg width="8" height="8" viewBox="0 0 8 8"><path d="M0 3h8v2H0z" fill="#555a63" /></svg>
        </RoundButton>
        <ZoomSlider type="range" aria-label="Масштаб" defaultValue={50} />
        <RoundButton aria-label="Увеличить">
          <svg width="8" height="8" viewBox="0 0 8 8"><path d="M0 3h3V0h2v3h3v2H5v3H3V5H0z" fill="#555a63" /></svg>
        </RoundButton>
      </StatusBar>

      <Taskbar>
        <StartButton><WindowsLogo />пуск</StartButton>
        <TaskButton $active><ExcelIcon />Microsoft Excel - Кни...</TaskButton>
        <TaskButton><FolderIcon />Практикум по инфо...</TaskButton>
        <TaskButton><WordIcon />Практикум по инфо...</TaskButton>
        <Language>EN</Language>
        <Tray>
          <TrayToggle aria-label="Скрытые значки">
            <svg width="8" height="8" viewBox="0 0 8 8"><path d="M6 0 2 4l4 4" fill="none" stroke="#fff" strokeWidth="2" /></svg>
          </TrayToggle>
          <KasperskyIcon />
          <NetworkIcon />
          <Clock>10:33</Clock>
        </Tray>
      </Taskbar>

      <Dialog role="dialog" aria-labelledby="dialog-title">
        <DialogTitle>
          <DialogHeading id="dialog-title">Результат подбора параметра</DialogHeading>
          <CaptionButton aria-label="Справка по окну">
            <svg width="11" height="13" viewBox="0 0 11 13"><path d="M2 4c0-4 7-4 7 0 0 2.500-3.500 2.500-3.500 5M5.500 10.500v2" fill="none" stroke="#fff" strokeWidth="2" /></svg>
          </CaptionButton>
          <CaptionButton $close aria-label="Закрыть диалог">
            <svg width="11" height="11" viewBox="0 0 11 11"><path d="m1 1 9 9M10 1l-9 9" stroke="#fff" strokeWidth="2" /></svg>
          </CaptionButton>
        </DialogTitle>
        <DialogBody>
          <DialogTop>
            <DialogText>
              <Message>Подбор параметра для ячейки B1.<br />Решение найдено.</Message>
              <Values>
                <dt>Подбираемое значение:</dt>
                <dd>1,1</dd>
                <dt>Текущее значение:</dt>
                <dd>1,10037940</dd>
              </Values>
            </DialogText>
            <SideButtons>
              <DialogButton $w={81} disabled>Шаг</DialogButton>
              <DialogButton $w={81} disabled>Пауза</DialogButton>
            </SideButtons>
          </DialogTop>
          <DialogActions>
            <DialogButton $w={74} $default>ОК</DialogButton>
            <DialogButton $w={74}>Отмена</DialogButton>
          </DialogActions>
        </DialogBody>
      </Dialog>
    </Window>
  );
}
